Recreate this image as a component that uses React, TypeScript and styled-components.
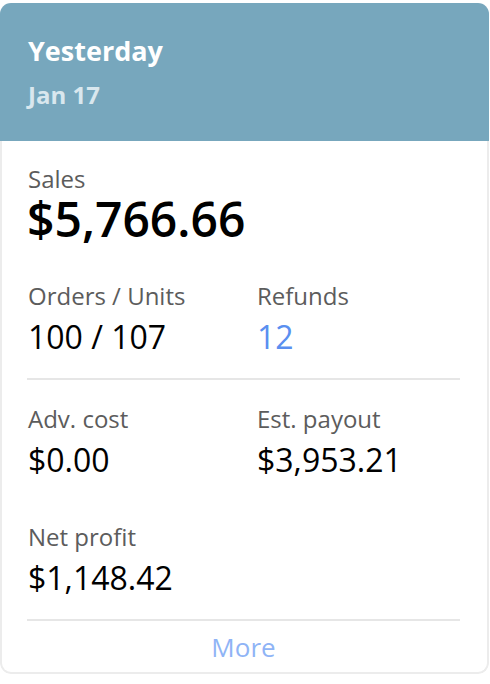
import React from "react";
import styled, { createGlobalStyle } from "styled-components";

const Global = createGlobalStyle`
  html, body { margin: 0; padding: 0; background: #ffffff; }
  body { padding-top: 3px; font-family: "Open Sans", "Noto Sans", Arial, sans-serif; }
`;

const Card = styled.div`
  width: 489px;
  border-radius: 11px;
  overflow: hidden;
  background: #ffffff;
`;

const Header = styled.header`
  background: #77a7bd;
  height: 138px;
  box-sizing: border-box;
  padding: 31px 28px 0;
  display: flex;
  flex-direction: column;
  gap: 12px;
`;

const Title = styled.div`
  font-size: 27px;
  line-height: 34px;
  font-weight: 700;
  color: #ffffff;
`;

const Subtitle = styled.div`
  font-size: 24px;
  line-height: 30px;
  font-weight: 700;
  color: #d9e7ee;
`;

const Body = styled.section`
  border: 2px solid #ececec;
  border-top: 0;
  border-radius: 0 0 11px 11px;
  padding: 24px 27px 0 25px;
  display: flex;
  flex-direction: column;
`;

const Label = styled.div`
  font-size: 24px;
  line-height: 28px;
  color: #5c5c5c;
  padding-left: 1px;
`;

const Big = styled.div`
  font-size: 48px;
  line-height: 52px;
  font-weight: 600;
  color: #000000;
`;

const Grid = styled.div<{ $top: number; $rowGap?: number }>`
  display: grid;
  grid-template-columns: 229px 1fr;
  row-gap: ${(p) => p.$rowGap ?? 0}px;
  margin-top: ${(p) => p.$top}px;
`;

const Metric = styled.div`
  display: flex;
  flex-direction: column;
  gap: 8px;
`;

const Value = styled.div<{ $accent?: boolean }>`
  font-size: 32px;
  line-height: 38px;
  color: ${(p) => (p.$accent ? "#5a8ff0" : "#000000")};
  padding-left: 1px;
`;

const Divider = styled.hr`
  border: 0;
  height: 2px;
  background: #e6e6e6;
  margin: 22px 0 0;
`;

const More = styled.a`
  display: flex;
  align-items: center;
  justify-content: center;
  height: 51px;
  font-size: 26px;
  color: #8fb4f6;
  text-decoration: none;
  cursor: pointer;
`;

export default function App() {
  return (
    <>
      <Global />
      <Card>
        <Header>
          <Title>Yesterday</Title>
          <Subtitle>Jan 17</Subtitle>
        </Header>
        <Body>
          <Label>Sales</Label>
          <Big>$5,766.66</Big>
          <Grid $top={37}>
            <Metric>
              <Label>Orders / Units</Label>
              <Value>100 / 107</Value>
            </Metric>
            <Metric>
              <Label>Refunds</Label>
              <Value $accent>12</Value>
            </Metric>
          </Grid>
          <Divider />
          <Grid $top={25} $rowGap={44}>
            <Metric>
              <Label>Adv. cost</Label>
              <Value>$0.00</Value>
            </Metric>
            <Metric>
              <Label>Est. payout</Label>
              <Value>$3,953.21</Value>
            </Metric>
            <Metric>
              <Label>Net profit</Label>
              <Value>$1,148.42</Value>
            </Metric>
          </Grid>
          <Divider />
          <More>More</More>
        </Body>
      </Card>
    </>
  );
}
